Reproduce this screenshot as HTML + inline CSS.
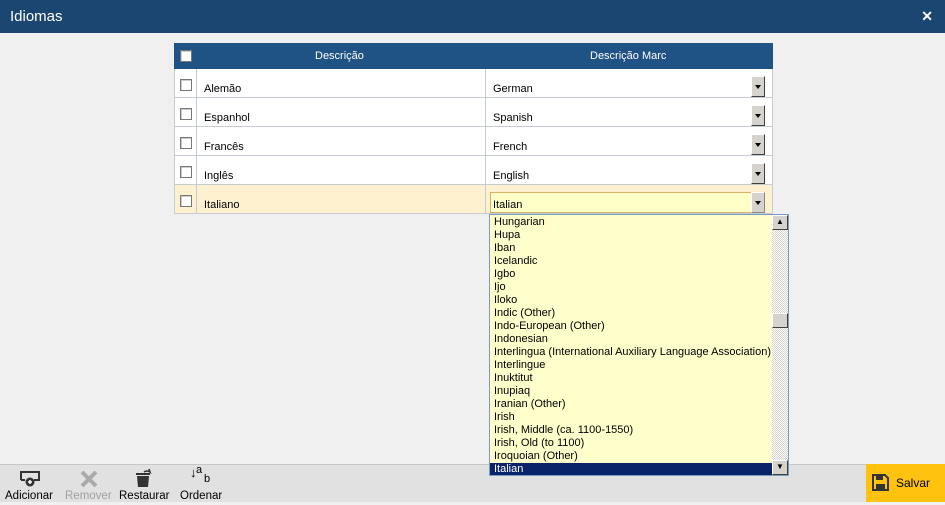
<!DOCTYPE html>
<html><head><meta charset="utf-8"><style>
*{margin:0;padding:0;box-sizing:border-box}
body{width:945px;height:505px;overflow:hidden;background:#f0f0f0;font-family:"Liberation Sans",sans-serif;font-size:11px;color:#000;position:relative}
.title{position:absolute;left:0;top:0;width:945px;height:33px;background:#1c4672;color:#fff;font-size:15px;line-height:33px;padding-left:10px}
.close{position:absolute;right:12px;top:0;font-size:14px;font-weight:bold}
.tbl{position:absolute;left:174px;top:43px;width:599px}
.hdr{height:26px;background:#1f5285;color:#fff;position:relative}
.hdr span{position:absolute;top:7px}
.row{height:29px;border:1px solid #c5ccd3;border-top:none;position:relative;background:#fff}
.row.sel{background:#fdf1d0}
.cb{position:absolute;left:5px;top:10px;width:12px;height:12px;border:1px solid #777;background:#fff;box-shadow:inset 1px 1px 0 #ccc}
.c1{position:absolute;left:21px;top:0;bottom:0;border-left:1px solid #c5ccd3}
.c2{position:absolute;left:310px;top:0;bottom:0;border-left:1px solid #c5ccd3}
.t1{position:absolute;left:29px;top:14px}
.t2{position:absolute;left:318px;top:14px}
.btn{position:absolute;left:576px;top:7px;width:14px;height:21px;background:#d6d3ce;border:1px solid;border-color:#fff #404040 #404040 #fff}
.btn:after{content:"";position:absolute;left:3px;top:8px;border:3px solid transparent;border-top:4px solid #000}
.inp{position:absolute;left:315px;top:7px;width:262px;height:21px;background:#ffffc8;border:1px solid #d9b26a}
.list{position:absolute;z-index:5;left:489px;top:214px;width:300px;height:262px;background:#ffffcc;border:1px solid #7a9cc0;overflow:hidden}
.it{height:13px;line-height:13px;padding-left:4px;white-space:nowrap}
.hl{background:#0a246a;color:#fff}
.sb{position:absolute;right:0;top:0;width:16px;bottom:0;background:repeating-conic-gradient(#d6d3ce 0 25%,#fff 0 50%) 0 0/2px 2px}
.sbb{position:absolute;left:0;width:16px;height:15px;background:#d6d3ce;border:1px solid;border-color:#fff #404040 #404040 #fff;font-size:8px;text-align:center;line-height:12px}
.foot{position:absolute;left:0;top:464px;width:945px;height:38px;background:#e1e1e1;border-top:1px solid #c8c8c8}
.tb{position:absolute;top:26px;font-size:11.5px}
.save{position:absolute;right:0;top:464px;width:79px;height:38px;background:#ffc20e;font-size:12px}
</style></head><body>
<div class="title">Idiomas<span class="close">✕</span></div>
<div class="tbl">
<div class="hdr"><div class="cb" style="left:6px;top:7px"></div><span style="left:141px">Descrição</span><span style="left:416px">Descrição Marc</span></div>
<div class="row"><div class="cb"></div><div class="c1"></div><div class="c2"></div><span class="t1">Alemão</span><span class="t2">German</span><div class="btn"></div></div>
<div class="row"><div class="cb"></div><div class="c1"></div><div class="c2"></div><span class="t1">Espanhol</span><span class="t2">Spanish</span><div class="btn"></div></div>
<div class="row"><div class="cb"></div><div class="c1"></div><div class="c2"></div><span class="t1">Francês</span><span class="t2">French</span><div class="btn"></div></div>
<div class="row"><div class="cb"></div><div class="c1"></div><div class="c2"></div><span class="t1">Inglês</span><span class="t2">English</span><div class="btn"></div></div>
<div class="row sel"><div class="cb"></div><div class="c1"></div><div class="c2"></div><div class="inp"></div><span class="t1">Italiano</span><span class="t2">Italian</span><div class="btn" style="border-color:#fff #888 #888 #fff"></div></div>
</div>
<div class="foot">
<svg style="position:absolute;left:19px;top:5px" width="22" height="18" viewBox="0 0 22 18"><path d="M2 10V2h18v8h-5M2 10h4" fill="none" stroke="#333" stroke-width="2"/><circle cx="11" cy="12" r="4.5" fill="#333"/><path d="M11 10v4M9 12h4" stroke="#fff" stroke-width="1.5"/></svg>
<span class="tb" style="left:5px;top:25px">Adicionar</span>
<svg style="position:absolute;left:80px;top:5px" width="18" height="18"><path d="M2 2L16 16M16 2L2 16" stroke="#aaa" stroke-width="4"/></svg>
<span class="tb" style="left:65px;top:25px;color:#a0a0a0">Remover</span>
<svg style="position:absolute;left:134px;top:2px" width="20" height="22" viewBox="0 0 20 22"><path d="M3 9h12l-1 11H4z" fill="#333"/><rect x="2" y="6" width="14" height="2" fill="#333"/><path d="M10 5a5 5 0 0 1 6 0l-1-3" fill="none" stroke="#333" stroke-width="1.6"/></svg>
<span class="tb" style="left:119px;top:25px">Restaurar</span>
<span style="position:absolute;left:190px;top:0;font-size:13px">↓</span><span style="position:absolute;left:196px;top:-1px;font-size:11px">a</span><span style="position:absolute;left:204px;top:8px;font-size:11px">b</span>
<span class="tb" style="left:180px;top:25px">Ordenar</span>
</div>
<div class="list">
<div class="it" style="margin-top:1px">Hungarian</div><div class="it">Hupa</div><div class="it">Iban</div><div class="it">Icelandic</div><div class="it">Igbo</div><div class="it">Ijo</div><div class="it">Iloko</div><div class="it">Indic (Other)</div><div class="it">Indo-European (Other)</div><div class="it">Indonesian</div><div class="it">Interlingua (International Auxiliary Language Association)</div><div class="it">Interlingue</div><div class="it">Inuktitut</div><div class="it">Inupiaq</div><div class="it">Iranian (Other)</div><div class="it">Irish</div><div class="it">Irish, Middle (ca. 1100-1550)</div><div class="it">Irish, Old (to 1100)</div><div class="it">Iroquoian (Other)</div><div class="it hl">Italian</div>
<div class="sb"><div class="sbb" style="top:0">▲</div><div class="sbb" style="top:98px"></div><div class="sbb" style="bottom:0">▼</div></div>
</div>
<div class="save"><svg style="position:absolute;left:6px;top:10px" width="17" height="17" viewBox="0 0 17 17"><path d="M1 1h12l3 3v12H1z" fill="none" stroke="#333" stroke-width="2"/><rect x="4" y="1" width="7" height="5" fill="#333"/><rect x="4" y="10" width="9" height="6" fill="#333"/></svg><span style="position:absolute;left:30px;top:12px">Salvar</span></div>
</body></html>
